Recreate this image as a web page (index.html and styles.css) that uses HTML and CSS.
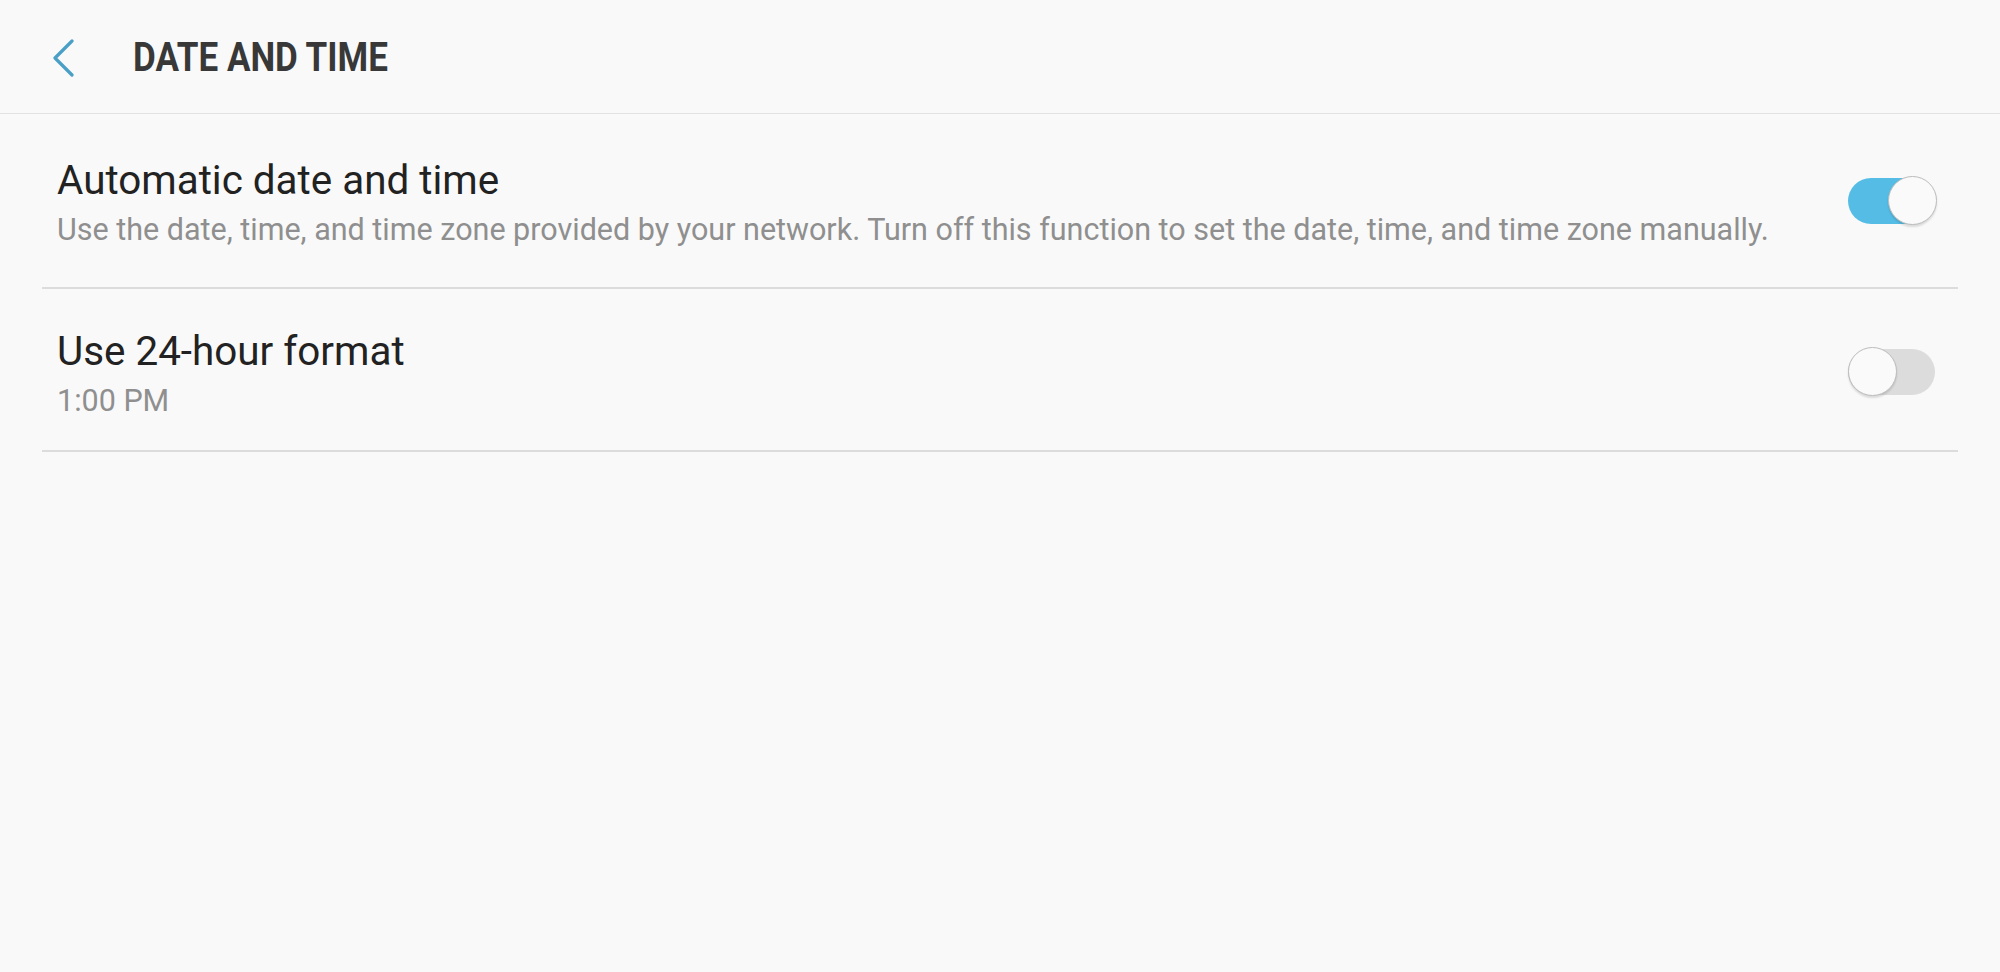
FILE: index.html
```html
<!DOCTYPE html>
<html lang="en">
<head>
    <meta charset="UTF-8">
    <title>Date and time</title>
    <link rel="stylesheet" href="styles.css">
</head>
<body>
    <header class="app-bar">
      <button class="back-btn" aria-label="Navigate up">
        <svg width="26" height="38" viewBox="0 0 26 38">
          <path d="M22 2 L5 19 L22 36" fill="none" stroke="#4a9fc6" stroke-width="3.2" stroke-linecap="round" stroke-linejoin="round"/>
        </svg>
      </button>
      <h1 class="app-title">DATE AND TIME</h1>
    </header>

    <div class="settings-list">
      <div class="setting-row setting-row--first">
        <div class="setting-text">
          <div class="setting-title">Automatic date and time</div>
          <div class="setting-summary">Use the date, time, and time zone provided by your network. Turn off this function to set the date, time, and time zone manually.</div>
        </div>
        <div class="switch switch--on"><span class="switch-track"></span><span class="switch-knob"></span></div>
      </div>
      <div class="setting-row">
        <div class="setting-text">
          <div class="setting-title">Use 24-hour format</div>
          <div class="setting-summary">1:00 PM</div>
        </div>
        <div class="switch"><span class="switch-track"></span><span class="switch-knob"></span></div>
      </div>
    </div>
</body>
</html>
```

FILE: styles.css
```css
html, body {
  margin: 0;
  background: #f9f9f9;
  font-family: Roboto, "Noto Sans", sans-serif;
}

/* top bar */
.app-bar {
  height: 113px;
  display: flex;
  align-items: center;
  border-bottom: 1px solid #e2e2e2;
}
.back-btn {
  border: none;
  background: none;
  padding: 0;
  margin: 2px 0 0 50px;
  width: 26px;
  height: 38px;
  display: flex;
}
.app-title {
  margin: 2px 0 0 57px;
  font-size: 40px;
  font-weight: 700;
  color: #383838;
  transform: scaleX(0.875);
  transform-origin: left center;
}

/* list */
.settings-list {
  margin: 0 42px;
}
.setting-row {
  display: flex;
  align-items: center;
  padding: 39px 21px 30px 15px;
  border-bottom: 2px solid #dcdcdc;
}
.setting-row--first {
  padding-top: 43px;
  padding-bottom: 38px;
}
.setting-text {
  flex: 1;
  display: flex;
  flex-direction: column;
  gap: 6px;
}
.setting-title {
  font-size: 40.4px;
  line-height: 48px;
  color: #222;
}
.setting-summary {
  font-size: 30.5px;
  line-height: 38px;
  color: #8f8f8f;
}

/* switch */
.switch {
  position: relative;
  width: 89px;
  height: 50px;
  flex: none;
  margin-bottom: 5px;
}
.switch-track {
  position: absolute;
  left: 0;
  right: 2px;
  top: 2px;
  bottom: 2px;
  border-radius: 23px;
  background: #dcdcdc;
}
.switch--on .switch-track {
  background: #55bde5;
}
.switch-knob {
  position: absolute;
  top: 0;
  left: 0;
  width: 47px;
  height: 47px;
  border-radius: 50%;
  background: #fafafa;
  border: 1.5px solid #bcbcbc;
  box-shadow: 0 2px 2px rgba(0, 0, 0, 0.12);
}
.switch--on .switch-knob {
  left: auto;
  right: 0;
}
```
